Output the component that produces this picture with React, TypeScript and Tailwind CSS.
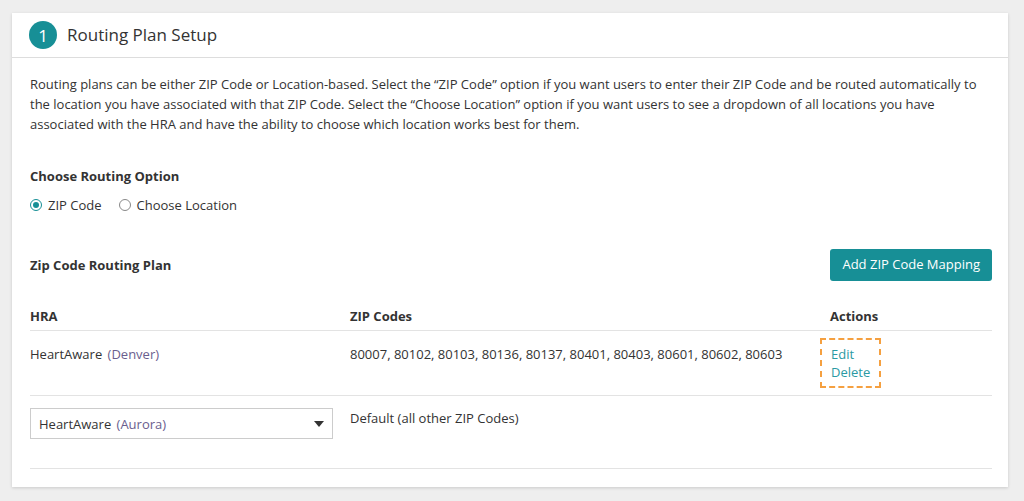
import React, { useState } from 'react';

const RoutingPlanSetup = () => {
  const [option, setOption] = useState('zip');

  return (
    <div className="min-h-screen bg-[#eeeeee] pt-[13px] pb-[14px] font-['Open_Sans',sans-serif] text-[#333333]">
      <div className="ml-[12px] mr-[16px] bg-white shadow-[0_1px_3px_rgba(0,0,0,0.15)]">
        {/* Header */}
        <div className="h-[45px] flex items-center gap-[10px] px-[17px] border-b border-[#dddddd]">
          <div className="w-[28px] h-[28px] rounded-full bg-[#178f96] text-white flex items-center justify-center text-[17px] leading-none">
            1
          </div>
          <h1 className="text-[17px] text-[#333333]">Routing Plan Setup</h1>
        </div>

        {/* Body */}
        <div className="px-[18px] pr-[16px] pt-[16px] pb-[18px] text-[13px]">
          <p className="leading-[20px]">
            Routing plans can be either ZIP Code or Location-based. Select the “ZIP Code” option if you want users to enter their ZIP Code and be routed automatically to the location you have associated with that ZIP Code. Select the “Choose Location” option if you want users to see a dropdown of all locations you have associated with the HRA and have the ability to choose which location works best for them.
          </p>

          <h2 className="font-bold mt-[32px] leading-[20px]">Choose Routing Option</h2>
          <div className="flex items-center gap-[17px] mt-[9px] leading-[20px]">
            <label className="flex items-center gap-[6px] cursor-pointer" onClick={() => setOption('zip')}>
              <span className="w-[12px] h-[12px] rounded-full border border-[#178f96] flex items-center justify-center bg-white">
                {option === 'zip' && <span className="w-[6px] h-[6px] rounded-full bg-[#178f96]"></span>}
              </span>
              ZIP Code
            </label>
            <label className="flex items-center gap-[6px] cursor-pointer" onClick={() => setOption('location')}>
              <span className="w-[12px] h-[12px] rounded-full border border-[#888888] flex items-center justify-center bg-white">
                {option === 'location' && <span className="w-[6px] h-[6px] rounded-full bg-[#178f96]"></span>}
              </span>
              Choose Location
            </label>
          </div>

          <div className="flex items-center justify-between mt-[34px]">
            <h2 className="font-bold leading-[20px]">Zip Code Routing Plan</h2>
            <button className="h-[32px] px-[12px] rounded-[3px] bg-[#178f96] text-white text-[13px]">
              Add ZIP Code Mapping
            </button>
          </div>

          {/* Table */}
          <div className="mt-[25px]">
            <div className="grid grid-cols-[320px_470px_1fr] font-bold leading-[20px] pb-[4px] border-b border-[#e3e3e3]">
              <div>HRA</div>
              <div>ZIP Codes</div>
              <div className="pl-[10px]">Actions</div>
            </div>

            <div className="grid grid-cols-[320px_470px_1fr] pt-[7px] pb-[7px] border-b border-[#e3e3e3] leading-[20px]">
              <div className="pt-[6px]">
                HeartAware <span className="text-[#6a5e8e] ml-[2px]">(Denver)</span>
              </div>
              <div className="pt-[6px]">80007, 80102, 80103, 80136, 80137, 80401, 80403, 80601, 80602, 80603</div>
              <div>
                <div className="inline-flex flex-col border-2 border-dashed border-[#f5a040] px-[9px] py-[5px] leading-[18px] text-[#2a9aa3]">
                  <a href="#" className="text-[#2a9aa3]">Edit</a>
                  <a href="#" className="text-[#2a9aa3]">Delete</a>
                </div>
              </div>
            </div>

            <div className="grid grid-cols-[320px_470px_1fr] pt-[12px] pb-[29px] border-b border-[#e3e3e3] leading-[20px]">
              <div>
                <div className="w-[303px] h-[31px] border border-[#cccccc] flex items-center justify-between pl-[8px] pr-[8px]">
                  <span>
                    HeartAware <span className="text-[#6a5e8e] ml-[2px]">(Aurora)</span>
                  </span>
                  <svg width="10" height="6" viewBox="0 0 10 6">
                    <path d="M0 0 L10 0 L5 6 Z" fill="#333333" />
                  </svg>
                </div>
              </div>
              <div>Default (all other ZIP Codes)</div>
              <div></div>
            </div>
          </div>
        </div>
      </div>
    </div>
  );
};

export default RoutingPlanSetup;
